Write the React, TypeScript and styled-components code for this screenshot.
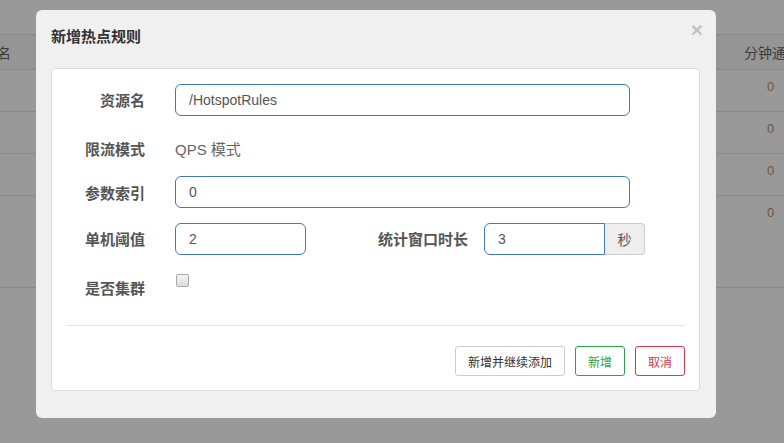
import React from 'react';
import styled, { createGlobalStyle } from 'styled-components';

const GlobalStyle = createGlobalStyle`
  body {
    margin: 0;
    background: #999999;
    font-family: "Liberation Sans", "Noto Sans CJK SC", sans-serif;
  }
`;

const rows = ['0', '0', '0', '0'];

export default function App() {
  return (
    <>
      <GlobalStyle />
      <Page>
        <Table>
          <HeadRow>
            <LeftCell>资源名</LeftCell>
            <RightCell>分钟通过</RightCell>
          </HeadRow>
          {rows.map((v, i) => (
            <BodyRow key={i} $tall={i === rows.length - 1}>
              <LeftCell />
              <ZeroCell>{v}</ZeroCell>
            </BodyRow>
          ))}
        </Table>

        <Modal>
          <ModalHeader>
            <Title>新增热点规则</Title>
            <Close>×</Close>
          </ModalHeader>
          <Panel>
            <FormRow>
              <Label>资源名</Label>
              <Input $width={455} defaultValue="/HotspotRules" />
            </FormRow>
            <FormRow $height={30}>
              <Label $top={9}>限流模式</Label>
              <StaticText>QPS 模式</StaticText>
            </FormRow>
            <FormRow>
              <Label $top={8}>参数索引</Label>
              <Input $width={455} defaultValue="0" />
            </FormRow>
            <FormRow>
              <Label>单机阈值</Label>
              <Input $width={131} defaultValue="2" />
              <Label $width={132} $left={30}>统计窗口时长</Label>
              <InputGroup>
                <Input $width={121} $joined defaultValue="3" />
                <Addon>秒</Addon>
              </InputGroup>
            </FormRow>
            <FormRow $last>
              <Label $top={9}>是否集群</Label>
              <Check type="checkbox" />
            </FormRow>
            <Divider />
            <Actions>
              <Button $kind="default">新增并继续添加</Button>
              <Button $kind="success">新增</Button>
              <Button $kind="danger">取消</Button>
            </Actions>
          </Panel>
        </Modal>
      </Page>
    </>
  );
}

const Page = styled.div`
  position: relative;
  width: 784px;
  height: 443px;
  overflow: hidden;
  background: #999999;
`;

const Table = styled.div`
  padding-top: 34px;
`;

const HeadRow = styled.div`
  display: flex;
  justify-content: space-between;
  align-items: center;
  height: 34px;
  background: #959595;
  border-top: 1px solid #8a8a8a;
  border-bottom: 1px solid #8a8a8a;
  color: #3a3a3a;
  font-size: 14px;
`;

const BodyRow = styled.div<{ $tall?: boolean }>`
  display: flex;
  justify-content: space-between;
  align-items: flex-start;
  height: ${(p) => (p.$tall ? 91 : 41)}px;
  border-bottom: 1px solid #8a8a8a;
`;

const LeftCell = styled.div`
  display: flex;
  justify-content: flex-end;
  width: 11px;
  overflow: hidden;
  white-space: nowrap;
`;

const RightCell = styled.div`
  width: 40px;
  overflow: hidden;
  white-space: nowrap;
`;

const ZeroCell = styled.div`
  width: 17px;
  padding-top: 9px;
  font-size: 13px;
  color: #6e5540;
`;

const Modal = styled.div`
  position: absolute;
  left: 36px;
  top: 10px;
  width: 680px;
  height: 408px;
  box-sizing: border-box;
  background: #f0f0f0;
  border-radius: 6px;
  padding: 0 16px 0 15px;
`;

const ModalHeader = styled.div`
  display: flex;
  justify-content: space-between;
  align-items: flex-start;
  height: 58px;
  box-sizing: border-box;
  padding-top: 16px;
`;

const Title = styled.div`
  font-size: 15px;
  line-height: 22px;
  font-weight: bold;
  color: #333;
`;

const Close = styled.div`
  margin-top: -7px;
  margin-right: -3px;
  font-size: 21px;
  line-height: 22px;
  font-weight: bold;
  color: #c2c2c2;
`;

const Panel = styled.div`
  background: #fff;
  border: 1px solid #dddddd;
  border-radius: 4px;
  padding: 15px 14px 14px 15px;
`;

const FormRow = styled.div<{ $height?: number; $last?: boolean }>`
  display: flex;
  align-items: flex-start;
  height: ${(p) => p.$height ?? 32}px;
  margin-bottom: ${(p) => (p.$last ? 23 : 15)}px;
`;

const Label = styled.label<{ $width?: number; $left?: number; $top?: number }>`
  flex: none;
  width: ${(p) => p.$width ?? 78}px;
  margin-left: ${(p) => p.$left ?? 0}px;
  margin-right: ${(p) => (p.$left ? 16 : 30)}px;
  padding-top: ${(p) => p.$top ?? 7}px;
  text-align: right;
  font-size: 15px;
  line-height: 20px;
  font-weight: bold;
  color: #555;
`;

const StaticText = styled.div`
  padding-top: 9px;
  font-size: 15px;
  line-height: 20px;
  color: #666;
`;

const Input = styled.input<{ $width: number; $joined?: boolean }>`
  width: ${(p) => p.$width}px;
  height: 32px;
  box-sizing: border-box;
  padding: 0 13px;
  border: 1px solid #3a7cbc;
  border-radius: ${(p) => (p.$joined ? '6px 0 0 6px' : '6px')};
  font-family: inherit;
  font-size: 14px;
  color: #555;
  background: #fff;
  outline: none;
`;

const InputGroup = styled.div`
  display: flex;
`;

const Addon = styled.div`
  display: flex;
  align-items: center;
  justify-content: center;
  width: 40px;
  height: 32px;
  box-sizing: border-box;
  border: 1px solid #cccccc;
  border-left: none;
  border-radius: 0 4px 4px 0;
  background: #eeeeee;
  font-size: 14px;
  color: #555;
`;

const Check = styled.input`
  appearance: none;
  width: 13px;
  height: 13px;
  margin: 4px 0 0 1px;
  border: 1px solid #a9a9a9;
  border-radius: 2px;
  background: linear-gradient(#f5f5f5, #dcdcdc);
`;

const Divider = styled.div`
  height: 1px;
  background: #e5e5e5;
  margin: 0 0 20px -1px;
`;

const kinds = {
  default: { border: '#cccccc', color: '#333333' },
  success: { border: '#28a745', color: '#28a745' },
  danger: { border: '#dc3545', color: '#dc3545' },
};

const Actions = styled.div`
  display: flex;
  justify-content: flex-end;
  gap: 10px;
`;

const Button = styled.button<{ $kind: keyof typeof kinds }>`
  height: 30px;
  padding: 0 12px;
  background: #fff;
  border: 1px solid ${(p) => kinds[p.$kind].border};
  border-radius: 3px;
  font-family: inherit;
  font-size: 12px;
  color: ${(p) => kinds[p.$kind].color};
`;
